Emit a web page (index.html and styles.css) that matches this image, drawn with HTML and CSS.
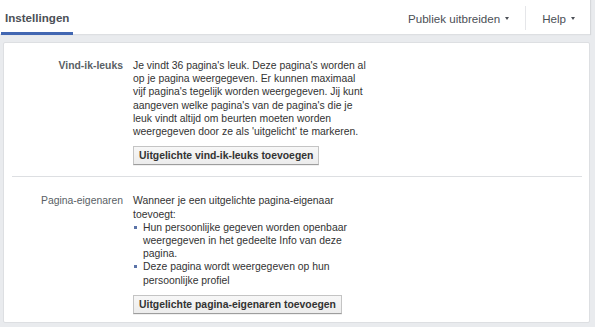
FILE: index.html
```html
<!DOCTYPE html>
<html lang="nl">
<head>
<meta charset="utf-8">
<title>Instellingen</title>
<link rel="stylesheet" href="styles.css">
</head>
<body>
<div class="topbar">
  <div class="tab">Instellingen</div>
  <div class="menu">
    <div class="menu-item">Publiek uitbreiden<span class="caret"></span></div>
    <div class="menu-item sep">Help<span class="caret"></span></div>
  </div>
</div>
<div class="card">
  <div class="section">
    <div class="label bold">Vind-ik-leuks</div>
    <div class="content">
      <p class="text">Je vindt 36 pagina's leuk. Deze pagina's worden al op je pagina weergegeven. Er kunnen maximaal vijf pagina's tegelijk worden weergegeven. Jij kunt aangeven welke pagina's van de pagina's die je leuk vindt altijd om beurten moeten worden weergegeven door ze als 'uitgelicht' te markeren.</p>
      <button class="btn">Uitgelichte vind-ik-leuks toevoegen</button>
    </div>
  </div>
  <div class="section last">
    <div class="label">Pagina-eigenaren</div>
    <div class="content">
      <p class="text">Wanneer je een uitgelichte pagina-eigenaar toevoegt:</p>
      <ul class="list">
        <li>Hun persoonlijke gegeven worden openbaar weergegeven in het gedeelte Info van deze pagina.</li>
        <li>Deze pagina wordt weergegeven op hun persoonlijke profiel</li>
      </ul>
      <button class="btn">Uitgelichte pagina-eigenaren toevoegen</button>
    </div>
  </div>
</div>
</body>
</html>
```
FILE: styles.css
```css
html, body {
  margin: 0;
  padding: 0;
}
body {
  background: #e9ebee;
  font-family: "Liberation Sans", Arial, sans-serif;
  width: 595px;
  height: 327px;
  overflow: hidden;
}
.topbar {
  width: 590px;
  height: 34px;
  background: #fff;
  border-bottom: 1px solid #dddfe2;
  box-shadow: 1px 0 1px rgba(0,0,0,0.08);
  display: flex;
  justify-content: space-between;
  align-items: stretch;
  box-sizing: content-box;
}
.tab {
  margin-left: 1px;
  padding: 0 4px;
  height: 35px;
  box-sizing: border-box;
  border-bottom: 3px solid #4267b2;
  display: flex;
  align-items: center;
  padding-top: 2px;
  font-size: 11.6px;
  font-weight: bold;
  color: #4b4f56;
}
.menu {
  display: flex;
  align-items: center;
  padding-right: 15px;
}
.menu-item {
  font-size: 11.6px;
  color: #4b4f56;
  padding: 0 16px 0 15px;
  height: 24px;
  display: flex;
  align-items: center;
  margin-top: 2px;
}
.menu-item.sep {
  border-left: 1px solid #e5e6e9;
  padding-right: 0;
  padding-left: 16px;
}
.caret {
  display: inline-block;
  width: 0;
  height: 0;
  border-left: 2px solid transparent;
  border-right: 2px solid transparent;
  border-top: 3px solid #4b4f56;
  margin-left: 5px;
  margin-top: 1px;
}
.card {
  margin: 7px 0 0 3px;
  width: 587px;
  height: 281px;
  box-sizing: border-box;
  background: #fff;
  border: 1px solid #dddfe2;
  border-radius: 2px;
  padding: 0 7px 0 8px;
}
.section {
  display: grid;
  grid-template-columns: 111px 236px;
  column-gap: 10px;
  padding: 16px 0 11px;
  border-bottom: 1px solid #dddfe2;
}
.section.last {
  border-bottom: none;
  padding-top: 17px;
  padding-bottom: 8px;
}
.label {
  text-align: right;
  font-size: 10.4px;
  line-height: 13.2px;
  color: #5a5f66;
}
.label.bold {
  font-weight: bold;
}
.content {
  font-size: 10.4px;
  line-height: 13.2px;
  color: #333;
}
.text {
  margin: 0;
}
.list {
  margin: 0;
  padding: 0 0 0 10px;
  list-style: none;
}
.list li {
  position: relative;
}
.list li::before {
  content: "";
  position: absolute;
  left: -9px;
  top: 5px;
  width: 3px;
  height: 3px;
  background: #5b73a8;
}
.btn {
  margin-top: 8px;
  display: block;
  font-family: "Liberation Sans", Arial, sans-serif;
  font-size: 10.4px;
  line-height: 13.2px;
  font-weight: bold;
  color: #333;
  background: linear-gradient(#f7f7f7, #ececec);
  border: 1px solid #c4c4c4;
  border-bottom-color: #9d9d9d;
  border-radius: 0;
  padding: 2px 5px 2px 5px;
  box-shadow: 0 1px 0 rgba(0,0,0,0.06);
}
```
